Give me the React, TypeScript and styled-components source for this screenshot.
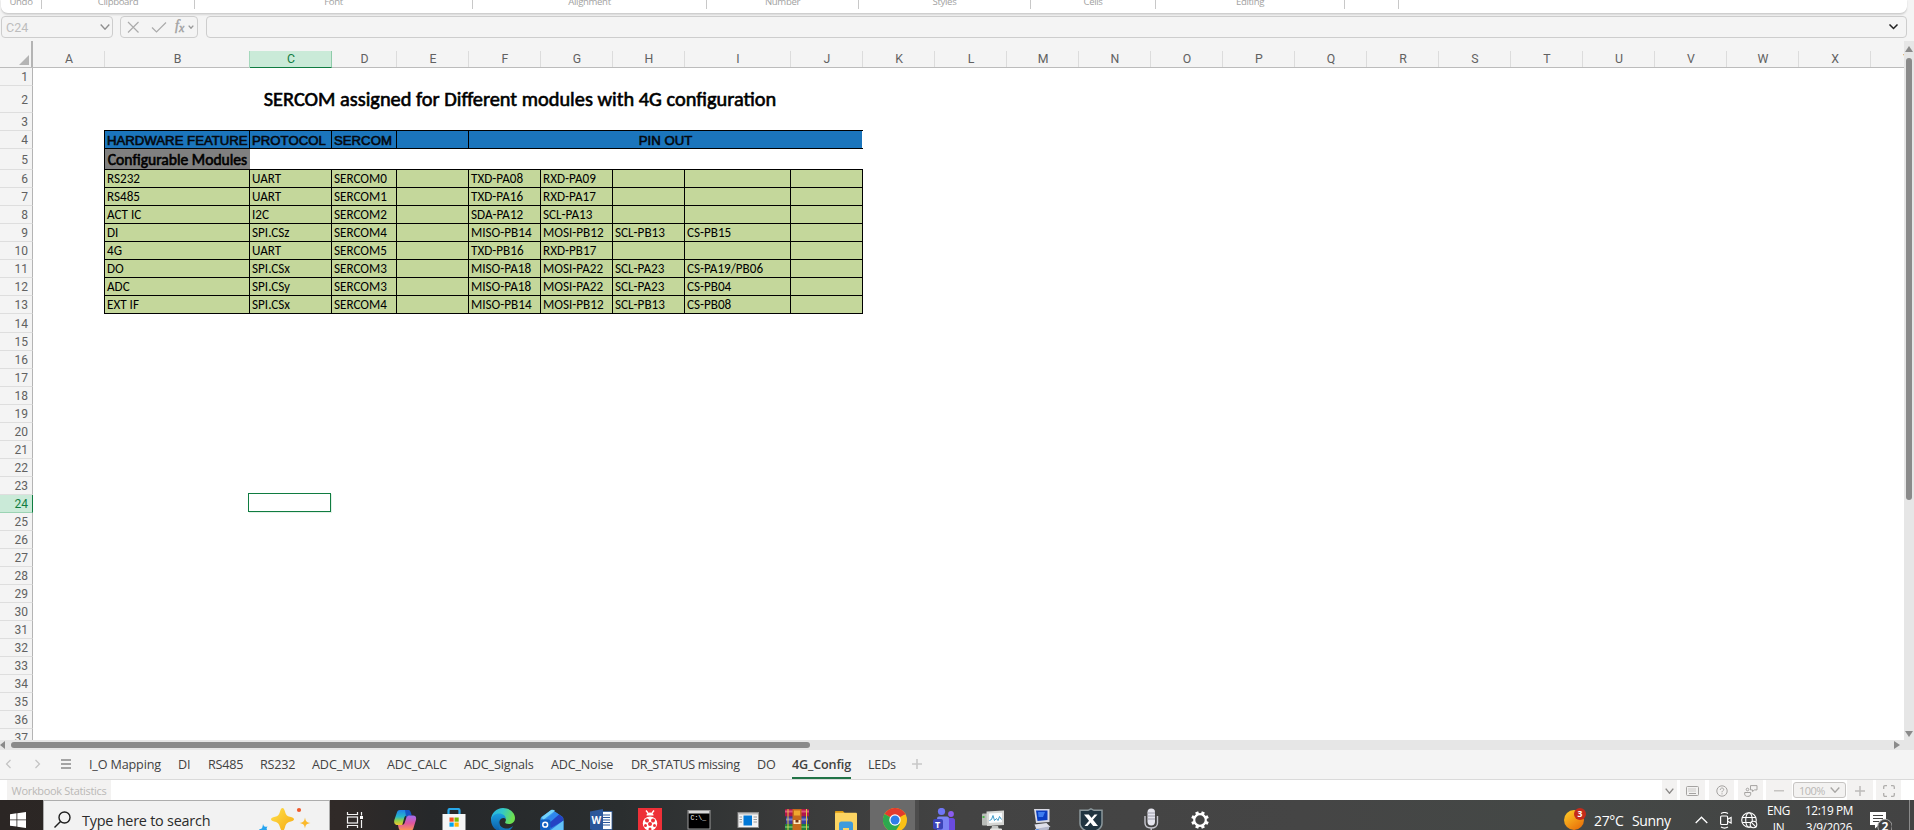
import React from "react";
import styled, { createGlobalStyle, css } from "styled-components";

const GlobalStyle = createGlobalStyle`
  * { box-sizing: border-box; }
  body { margin: 0; background: #fff; overflow: hidden; }
  svg { display: block; flex: none; }
`;

const ui = `"Open Sans", "Noto Sans", sans-serif`;
const narrow = `Roboto, "Liberation Sans", sans-serif`;
const sheetFont = `Carlito, Lato, "Open Sans", sans-serif`;
const heading = `"Liberation Sans", Arial, sans-serif`;

const Window = styled.div`
  width: 1914px;
  height: 830px;
  display: flex;
  flex-direction: column;
  overflow: hidden;
  background: #f4f4f4;
  font-family: ${ui};
`;

/* ---------- ribbon ---------- */
const Ribbon = styled.div`
  height: 14px;
  width: 1906px;
  margin-left: 1px;
  flex: none;
  display: flex;
  background: #fff;
  border-bottom: 1px solid #cfcfcf;
  border-radius: 0 0 7px 7px;
  box-shadow: 0 1px 2px #0000001f;
`;
const RibbonGroup = styled.div<{ $w: number }>`
  width: ${(p) => p.$w}px;
  height: 9px;
  border-right: 1px solid #c8c8c8;
  overflow: hidden;
  display: flex;
  justify-content: center;
  align-items: flex-end;
  font-size: 9.6px;
  line-height: 13px;
  letter-spacing: -0.35px;
  color: #a2a2a2;
  span { margin-bottom: 1px; }
`;

/* ---------- formula bar ---------- */
const FormulaBar = styled.div`
  height: 27px;
  flex: none;
  display: flex;
  padding: 2px 0 0 1px;
`;
const Box = styled.div<{ $w: number; $ml?: number }>`
  width: ${(p) => p.$w}px;
  margin-left: ${(p) => p.$ml ?? 0}px;
  height: 22px;
  flex: none;
  border: 1px solid #cdcdcd;
  border-radius: 4px;
  display: flex;
  align-items: center;
`;
const NameText = styled.span`
  font: 12.5px ${narrow};
  color: #bdbdbd;
  margin-left: 4px;
  width: 94px;
`;
const FxText = styled.span`
  font: italic 14px "Liberation Serif", serif;
  color: #a2a2a2;
  margin: -2px 4px 0 7px;
  -webkit-text-stroke: 0.4px #a2a2a2;
  sub { font-size: 12px; line-height: 0; vertical-align: -2px; }
`;

/* ---------- sheet ---------- */
const Workspace = styled.div`
  height: 699px;
  flex: none;
  display: flex;
`;
const Sheet = styled.div`
  width: 1904px;
  height: 699px;
  overflow: hidden;
  position: relative;
  background: #fff;
`;
const HeaderRow = styled.div`
  display: flex;
  align-items: flex-end;
  height: 27px;
  width: 1977px;
  background: #f4f4f4;
  border-bottom: 1px solid #bcbcbc;
`;
const Corner = styled.div`
  width: 33px;
  height: 26px;
  border-right: 2px solid #b4b4b4;
  display: flex;
  justify-content: flex-end;
  align-items: flex-end;
  padding: 0 2px 2px 0;
`;
const ColHead = styled.div<{ $w: number; $on?: boolean }>`
  width: ${(p) => p.$w}px;
  height: 16px;
  padding-left: 1px;
  border-right: 1px solid #dcdcdc;
  text-align: center;
  font: 12.3px/16px ${narrow};
  color: #616161;
  flex: none;
  ${(p) =>
    p.$on &&
    css`
      background: #caead8;
      color: #107c41;
      height: 17px;
      margin-bottom: -1px;
      border-bottom: 1px solid #107c41;
      border-right-color: #8fcbaa;
      box-shadow: -1px 0 0 #a5d8bc;
    `}
`;
const Row = styled.div<{ $h: number }>`
  display: flex;
  height: ${(p) => p.$h}px;
`;
const RowHead = styled.div<{ $on?: boolean }>`
  width: 33px;
  flex: none;
  background: ${(p) => (p.$on ? "#caead8" : "#f4f4f4")};
  color: ${(p) => (p.$on ? "#107c41" : "#616161")};
  border-right: 1px solid ${(p) => (p.$on ? "#107c41" : "#b4b4b4")};
  border-bottom: 1px solid ${(p) => (p.$on ? "#9bd3b3" : "#dedede")};
  display: flex;
  align-items: center;
  justify-content: flex-end;
  padding: 1px 4px 0 0;
  font: 12px ${narrow};
`;
const Gap = styled.div<{ $w: number; $right?: boolean; $bottom?: boolean }>`
  width: ${(p) => p.$w}px;
  border-right: ${(p) => (p.$right ? "1px solid #000" : "0")};
  border-bottom: ${(p) => (p.$bottom ? "1px solid #000" : "0")};
`;
const Title = styled.div`
  width: 830px;
  text-align: center;
  font: 400 20.35px/27px ${sheetFont};
  -webkit-text-stroke: 0.6px #000;
  color: #000;
`;
const Cell = styled.div<{ $w: number }>`
  width: ${(p) => p.$w}px;
  background: #c4d79b;
  border-right: 1px solid #000;
  border-bottom: 1px solid #000;
  padding-left: 2px;
  font: 13.15px/17px ${sheetFont};
  color: #000;
  white-space: nowrap;
`;
const HeadCell = styled.div<{ $w: number; $last?: boolean }>`
  width: ${(p) => p.$w}px;
  background: #1b75bc;
  border-right: ${(p) => (p.$last ? "0" : "1px solid #000")};
  border-bottom: 1px solid #000;
  padding-left: ${(p) => (p.$last ? 0 : 2)}px;
  text-align: ${(p) => (p.$last ? "center" : "left")};
  font: 400 13.2px/19px ${heading};
  -webkit-text-stroke: 0.6px #05090f;
  color: #05090f;
  white-space: nowrap;
`;
const LineEnd = styled.div`
  width: 1px;
  border-bottom: 1px solid #000;
`;
const ModulesCell = styled.div`
  width: 145px;
  background: #808080;
  border-bottom: 1px solid #000;
  text-align: center;
  font: 400 15.6px/22px ${sheetFont};
  -webkit-text-stroke: 0.6px #000;
  color: #000;
  white-space: nowrap;
`;
const Selection = styled.div`
  position: absolute;
  left: 248px;
  top: 452px;
  width: 83px;
  height: 19px;
  border: 1px solid #107c41;
  box-shadow: 1px 1px 0 #e3f2e8;
`;

/* ---------- scrollbars ---------- */
const VScroll = styled.div`
  width: 10px;
  height: 699px;
  background: #e6e6e6;
  display: flex;
  flex-direction: column;
  align-items: center;
  padding: 5px 0 3px;
`;
const VThumb = styled.div`
  width: 6px;
  height: 442px;
  margin: 6px 0 auto;
  border-radius: 3px;
  background: #8a8a8a;
`;
const HScroll = styled.div`
  height: 10px;
  flex: none;
  background: #e6e6e6;
  display: flex;
  align-items: center;
  padding-right: 14px;
`;
const HThumb = styled.div`
  width: 799px;
  height: 6px;
  margin: 0 auto 0 6px;
  border-radius: 3px;
  background: #8a8a8a;
`;

/* ---------- tabs ---------- */
const TabBar = styled.div`
  height: 30px;
  flex: none;
  display: flex;
  border-bottom: 1px solid #dadada;
`;
const TabTools = styled.div`
  width: 89px;
  flex: none;
  display: flex;
  align-items: center;
  padding: 0 0 1px 5px;
`;
const TabSlot = styled.div<{ $w: number }>`
  width: ${(p) => p.$w}px;
  flex: none;
`;
const TabLabel = styled.span<{ $on?: boolean; $ls: number }>`
  display: inline-block;
  height: 29px;
  font: ${(p) => (p.$on ? 600 : 400)} 12.6px/29px ${ui};
  letter-spacing: ${(p) => p.$ls}px;
  color: #424242;
  white-space: nowrap;
  border-bottom: ${(p) => (p.$on ? "2px solid #217346" : "0")};
`;

/* ---------- status bar ---------- */
const StatusBar = styled.div`
  height: 20px;
  flex: none;
  display: flex;
  background: #fff;
`;
const Stats = styled.div`
  margin: 0 auto 0 7px;
  width: 104px;
  background: #f3f2f1;
  font-size: 11px;
  line-height: 22px;
  letter-spacing: -0.32px;
  text-align: center;
  color: #bab8b6;
  white-space: nowrap;
`;
const StatusButton = styled.div<{ $w: number; $mr?: number }>`
  width: ${(p) => p.$w}px;
  margin-right: ${(p) => p.$mr ?? 0}px;
  background: #f3f2f1;
  display: flex;
  align-items: center;
  justify-content: center;
  padding-top: 2px;
`;
const Zoom = styled.div`
  width: 53px;
  height: 16px;
  margin: 2px 1px 0;
  border: 1px solid #c6c4c2;
  border-radius: 3px;
  background: #f3f2f1;
  display: flex;
  align-items: center;
  font-size: 11px;
  letter-spacing: -0.5px;
  color: #bab8b6;
  padding-left: 5px;
  gap: 5px;
`;

/* ---------- taskbar ---------- */
const Taskbar = styled.div`
  height: 30px;
  flex: none;
  display: flex;
  overflow: hidden;
  background: linear-gradient(90deg, #2b2624 0, #302a28 340px, #26282a 430px, #2a2e2f 620px, #3a3b3b 800px, #434343 960px, #454545 1300px, #444846 1560px, #434343 1914px);
`;
const Start = styled.div`
  width: 43px;
  padding: 12px 0 0 10px;
`;
const Search = styled.div`
  width: 287px;
  height: 30px;
  background: #f2f2f2;
  border: 1px solid #adadad;
  border-bottom: 0;
  display: flex;
  padding: 6px 0 0 10px;
`;
const SearchText = styled.span`
  font-size: 14.4px;
  line-height: 27px;
  letter-spacing: -0.22px;
  color: #2b2b2b;
  margin-left: 11px;
  width: 165px;
  white-space: nowrap;
`;
const AppSlot = styled.div<{ $active?: boolean; $ml?: number }>`
  width: 49px;
  height: 30px;
  margin-left: ${(p) => p.$ml ?? 0}px;
  flex: none;
  display: flex;
  justify-content: center;
  padding-top: 8px;
  background: ${(p) => (p.$active ? "linear-gradient(90deg, #6a6a6a 45px, #4c4c4c 45px)" : "none")};
  overflow: hidden;
`;
const Tray = styled.div`
  display: flex;
  margin-left: auto;
  width: 350px;
  height: 30px;
  overflow: hidden;
  color: #fff;
`;
const Weather = styled.div`
  font-size: 14px;
  line-height: 41px;
  letter-spacing: -0.35px;
  width: 101px;
  margin-left: 5px;
  white-space: pre;
  span { display: inline-block; width: 38px; }
`;
const TrayIcon = styled.div<{ $w: number; $top: number }>`
  width: ${(p) => p.$w}px;
  padding-top: ${(p) => p.$top}px;
`;
const Stack = styled.div<{ $w: number }>`
  width: ${(p) => p.$w}px;
  padding-top: 2px;
  text-align: center;
  font-size: 11.8px;
  line-height: 17px;
  letter-spacing: -0.35px;
  white-space: nowrap;
`;
const Desktop = styled.div`
  width: 5px;
  margin-left: auto;
  height: 30px;
  border-left: 1px solid #8a8a8a;
`;

/* ---------- data ---------- */
const groups: [string, number][] = [
  ["Undo", 41], ["Clipboard", 153], ["Font", 278], ["Alignment", 234], ["Number", 152],
  ["Styles", 172], ["Cells", 125], ["Editing", 189], ["", 54],
];
const columns: [string, number][] = [
  ["A", 72], ["B", 145], ["C", 82], ["D", 65], ["E", 72], ["F", 72], ["G", 72], ["H", 72], ["I", 106], ["J", 72],
  ..."KLMNOPQRSTUVWXY".split("").map((c) => [c, 72] as [string, number]),
];
const widths = columns.slice(1, 10).map((c) => c[1]);
const modules = [
  ["RS232", "UART", "SERCOM0", "", "TXD-PA08", "RXD-PA09", "", "", ""],
  ["RS485", "UART", "SERCOM1", "", "TXD-PA16", "RXD-PA17", "", "", ""],
  ["ACT IC", "I2C", "SERCOM2", "", "SDA-PA12", "SCL-PA13", "", "", ""],
  ["DI", "SPI.CSz", "SERCOM4", "", "MISO-PB14", "MOSI-PB12", "SCL-PB13", "CS-PB15", ""],
  ["4G", "UART", "SERCOM5", "", "TXD-PB16", "RXD-PB17", "", "", ""],
  ["DO", "SPI.CSx", "SERCOM3", "", "MISO-PA18", "MOSI-PA22", "SCL-PA23", "CS-PA19/PB06", ""],
  ["ADC", "SPI.CSy", "SERCOM3", "", "MISO-PA18", "MOSI-PA22", "SCL-PA23", "CS-PB04", ""],
  ["EXT IF", "SPI.CSx", "SERCOM4", "", "MISO-PB14", "MOSI-PB12", "SCL-PB13", "CS-PB08", ""],
];
const tabs: [string, number, number][] = [
  ["I_O Mapping", 89, -0.15], ["DI", 30, -0.2], ["RS485", 52, -0.2], ["RS232", 52, -0.2], ["ADC_MUX", 75, -0.1],
  ["ADC_CALC", 77, -0.1], ["ADC_Signals", 87, -0.15], ["ADC_Noise", 80, -0.2], ["DR_STATUS missing", 126, -0.38],
  ["DO", 35, -0.2], ["4G_Config", 76, -0.15], ["LEDs", 44, -0.2],
];

const Chevron = ({ w = 9, h = 5, color = "#9a9a9a", sw = 1.4 }: { w?: number; h?: number; color?: string; sw?: number }) => (
  <svg width={w} height={h} viewBox={`0 0 ${w} ${h}`} fill="none" stroke={color} strokeWidth={sw}>
    <path d={`M.7 .6 L${w / 2} ${h - 0.8} L${w - 0.7} .6`} />
  </svg>
);

const Icon = ({ children, size = 24 }: { children: React.ReactNode; size?: number }) => (
  <svg width={size} height={size} viewBox={`0 0 ${size} ${size}`}>{children}</svg>
);

const TaskView = () => (
  <Icon>
    <g fill="none" stroke="#f2f2f2" strokeWidth="1.2">
      <path d="M4.5 4v2.5h10V4M4.5 20v-2.5h10V20" />
      <rect x="4.5" y="9" width="10" height="6" />
      <path d="M18.5 4v3.5M18.5 12v8" />
    </g>
    <rect x="17" y="8" width="3" height="3" fill="#fff" />
  </Icon>
);
const Copilot = () => (
  <Icon>
    <defs>
      <linearGradient id="cpA" x1="0" y1="0" x2="0" y2="1">
        <stop offset="0" stopColor="#1f7fe8" /><stop offset=".45" stopColor="#28b7c9" /><stop offset=".7" stopColor="#8fcf4a" /><stop offset="1" stopColor="#f2c52e" />
      </linearGradient>
      <linearGradient id="cpB" x1="0" y1="0" x2="0" y2="1">
        <stop offset="0" stopColor="#a06df0" /><stop offset=".5" stopColor="#e0569f" /><stop offset="1" stopColor="#ff9a4d" />
      </linearGradient>
    </defs>
    <path d="M7 2h8.5c1.800 1.200 2 4 1.300 5.500h-3c-1.500 0-2.200 1-2.600 2.400L9.300 17H4.500C1.500 17 .6 14.500 1.500 11.500L4 4.300C4.600 2.900 5.500 2 7 2z" fill="url(#cpA)" />
    <path d="M12 2h3.500c1.500.2 2 1.500 2.500 3l.8 2.500h-3c-1.500 0-2.200 1-2.600 2.400z" fill="#1554c4" />
    <path d="M17.500 7.500h2.500c3 0 3.600 2.300 2.800 5L20.500 20c-.6 2-1.800 3-3.500 3H8.500C7 23 6 21.500 5.500 19.500L5 17h4c1.500 0 2.300-.8 2.800-2.400l1.600-5c.5-1.500 1.500-2.100 4.100-2.100z" fill="url(#cpB)" />
  </Icon>
);
const Store = () => (
  <Icon>
    <path d="M6.500 7V2.500c0-1 .5-1.500 1.500-1.500h8c1 0 1.500.5 1.500 1.500V7" fill="none" stroke="#28a8ea" strokeWidth="2.200" />
    <path d="M.5 6h23v18H.5z" fill="#f6f6f6" />
    <rect x="7.500" y="9.500" width="4.200" height="4.200" fill="#f25022" /><rect x="12.500" y="9.500" width="4.200" height="4.200" fill="#7fba00" />
    <rect x="7.500" y="14.500" width="4.200" height="4.200" fill="#00a4ef" /><rect x="12.500" y="14.500" width="4.200" height="4.200" fill="#ffb900" />
  </Icon>
);
const Edge = () => (
  <Icon>
    <defs>
      <linearGradient id="eg1" x1="0" y1="0" x2="1" y2=".3"><stop offset="0" stopColor="#25b0e8" /><stop offset=".5" stopColor="#33c8c8" /><stop offset="1" stopColor="#6de04f" /></linearGradient>
      <linearGradient id="eg2" x1="0" y1="0" x2="0" y2="1"><stop offset="0" stopColor="#1b9fe0" /><stop offset="1" stopColor="#0c59a4" /></linearGradient>
    </defs>
    <path d="M0 12C0 5 5.500 0 12 0s12 4.500 12 10c0 4-3 6-6.500 6-3 0-4-1-3-2.500.5-1 .5-2 0-3C13.500 8 11 7.500 9 8z" fill="url(#eg1)" />
    <path d="M0 12C.5 8 4 5.500 8 5.500c4 0 7 2.500 6.800 5.500C13 9 9.500 10 8.500 13c-1 4 2 7.500 6 8l-1 3H12C5.500 24 0 18.700 0 12z" fill="url(#eg2)" />
    <path d="M8.500 12c-1.500 5 2 8.500 7 8.500 3 0 5-1 6.500-2.500-1.500 3.500-5 6-9 6C8 24 5.500 17 8.500 12z" fill="#1473b8" />
  </Icon>
);
const Outlook = () => (
  <Icon>
    <defs><linearGradient id="ol" x1="0" y1="0" x2="1" y2="1"><stop offset="0" stopColor="#4bb6f7" /><stop offset="1" stopColor="#1a5fd6" /></linearGradient></defs>
    <path d="M.5 11.500c0-1.500.5-2.300 1.500-3l8-5.500c1.300-1 2.700-1 4 0l8 5.500c1 .7 1.500 1.500 1.500 3V24H.5z" fill="url(#ol)" />
    <path d="M2 9l9-7c1.500-.7 3-.3 4 .8L3 12z" fill="#74d4fd" />
    <path d="M3.500 13L15 4l4 2.500L7 16z" fill="#2f86ee" />
    <path d="M8 16L19 6.500l4 3V13L11 20z" fill="#2443c4" />
    <path d="M23.500 12.500V24H8z" fill="#63c3f7" />
    <rect x="0" y="11.500" width="10.500" height="10.500" rx="2" fill="#0f5fc2" />
    <circle cx="5.200" cy="16.700" r="2.400" fill="none" stroke="#fff" strokeWidth="1.500" />
  </Icon>
);
const iconLetter: React.CSSProperties = { fontFamily: "Open Sans, sans-serif", fontWeight: 700 };
const Word = () => (
  <Icon>
    <rect x="12" y="3.500" width="11" height="18" fill="#fff" stroke="#2b579a" strokeWidth=".8" />
    <path d="M14 7h7M14 9.500h7M14 12h7M14 14.500h7M14 17h7" stroke="#2b579a" strokeWidth="1.200" />
    <path d="M1 3.500L14 1v23L1 21.500z" fill="#2b579a" />
    <text x="2.600" y="16" fontSize="10" fill="#fff" style={iconLetter}>W</text>
  </Icon>
);
const Bug = () => (
  <Icon>
    <rect width="24" height="24" fill="#ee3038" />
    <path d="M8 2.500l2 2.500M16 2.500L14 5" stroke="#fff" strokeWidth="1.400" />
    <path d="M8.500 7.500a3.500 3 0 0 1 7 0z" fill="#fff" />
    <ellipse cx="12" cy="15.500" rx="7.200" ry="7" fill="#fff" />
    <g fill="#ee3038"><circle cx="9" cy="12.500" r="2" /><circle cx="15" cy="12.500" r="2" /><circle cx="12" cy="16" r="2" /><circle cx="7.500" cy="17.500" r="1.500" /><circle cx="16.500" cy="17.500" r="1.500" /><circle cx="12" cy="21" r="1.500" /></g>
  </Icon>
);
const Terminal = () => (
  <Icon>
    <rect x="1" y="2.500" width="22" height="18.500" fill="#000" stroke="#9b9b9b" />
    <rect x="1.500" y="3" width="21" height="2.500" fill="#d9d9d9" />
    <text x="3.500" y="12" fontSize="6.500" fill="#fff" style={{ fontFamily: "Liberation Mono, monospace" }}>C:\_</text>
  </Icon>
);
const News = () => (
  <Icon>
    <rect x="2" y="4.500" width="20.500" height="15" fill="#f3f3f3" stroke="#8e8e8e" />
    <rect x="2.500" y="5" width="19.500" height="1.500" fill="#bcbcbc" />
    <rect x="7.500" y="7.500" width="8.500" height="10" fill="#0078d7" />
    <path d="M3.500 9H6M3.500 11.500H6M3.500 14H6M17.500 9h3.500M17.500 11.500h3.500M17.500 14h3.500" stroke="#9a9a9a" />
  </Icon>
);
const Rar = () => (
  <Icon>
    <rect x="0" y="1" width="24" height="7.500" rx="1" fill="#b0174b" /><rect x="0" y="2.500" width="24" height="2" fill="#e0557a" />
    <rect x="1" y="8.500" width="22" height="7.500" fill="#3c3f9e" /><rect x="1" y="10.500" width="22" height="2" fill="#7a7fd0" />
    <rect x="0" y="16" width="24" height="8" fill="#23803a" /><rect x="0" y="18" width="24" height="2" fill="#58b060" />
    <rect x="7.500" y="1" width="9" height="23" fill="#c66a1c" /><path d="M9 2.500h6v5H9z" fill="#f0a830" /><path d="M8.500 12h7v4h-7z" fill="#fbe9c0" /><rect x="10.500" y="12" width="3" height="2.500" fill="#7a3510" />
    <path d="M3 1v23M21.500 1v23" stroke="#e3c443" />
  </Icon>
);
const Folder = () => (
  <Icon>
    <path d="M1 4c0-.6.400-1 1-1h7l2 2.500H1z" fill="#dc9a10" />
    <rect x="1" y="4.800" width="22" height="19" rx="1" fill="#fcd462" />
    <path d="M5 24v-8c0-1.500.8-2.500 2.500-2.500h9c1.700 0 2.500 1 2.500 2.500v8h-4v-4H9v4z" fill="#3f9bdc" />
  </Icon>
);
const Chrome = () => (
  <Icon>
    <circle cx="12" cy="12" r="12" fill="#fbc116" />
    <path d="M12 12L1.600 6A12 12 0 0 1 22.400 6z" fill="#e33b2e" />
    <path d="M12 12L1.600 6A12 12 0 0 0 12 24l5-8z" fill="#2da94f" />
    <path d="M12 6h10.400" stroke="#e33b2e" strokeWidth="1" />
    <circle cx="12" cy="12" r="5.700" fill="#fff" /><circle cx="12" cy="12" r="4.500" fill="#2f7de9" />
  </Icon>
);
const Teams = () => (
  <Icon>
    <circle cx="9.500" cy="3.500" r="3.600" fill="#6f76f5" /><circle cx="19" cy="6" r="2.900" fill="#8b5cf0" />
    <rect x="15" y="10" width="8" height="14" rx="2.500" fill="#6a4be0" /><rect x="5" y="8.500" width="12" height="16" rx="2" fill="#7b83f4" />
    <rect x="1" y="11" width="10" height="10.500" rx="2" fill="#3b43b8" />
    <text x="3" y="19.500" fontSize="9" fill="#fff" style={iconLetter}>T</text>
  </Icon>
);
const Monitor = () => (
  <Icon>
    <rect x="1" y="5.500" width="10" height="12" rx="1" fill="#b9bcb8" /><rect x="1.500" y="8" width="2" height="2" fill="#49b749" />
    <path d="M5.500 3.500L23 2.500v14.500L6 18z" fill="#d5d6d4" /><path d="M8 5.500l13-.700v9.500l-13 .7z" fill="#fafdff" />
    <path d="M8.500 12.500l2-1 1.500-4 1.500 5 2-2 1.500 2 1.500-4 2 3" fill="none" stroke="#3d9ac8" />
    <path d="M11 18h6l1 4h-8z" fill="#c4c6c4" /><rect x="9" y="20.500" width="12" height="4" rx="1" fill="#e3e3e1" />
  </Icon>
);
const RemotePc = () => (
  <Icon>
    <path d="M4 1h15.500v13L6 15z" fill="#d8d9e4" /><path d="M6 2.500h11.500V12L7.500 13z" fill="#0a3ec2" /><path d="M8 4h7l-2 5H8.500z" fill="#3d7df0" />
    <path d="M4.500 16.500l12-1.500 4 4-14 2.500z" fill="#dfe0ea" /><path d="M5 21l14-2.500v3L9 24H5z" fill="#b5b9cc" /><path d="M5 22c2-1.500 5-1 6 2H5z" fill="#2a7bf0" />
  </Icon>
);
const Shield = () => (
  <Icon>
    <path d="M12 .8l3 1.500h8v13c0 4.500-4 7.500-11 9C5 22.800 1 19.800 1 15.300v-13h8z" fill="#203440" stroke="#8b979b" strokeWidth="1.500" />
    <path d="M5 6.500h4.800l9.200 11.500h-4.800z" fill="#fff" /><path d="M18.500 6.500h-3L5.500 18h3z" fill="#fff" />
  </Icon>
);
const Mic = () => (
  <Icon>
    <rect x="8.500" y=".5" width="7.500" height="17" rx="3.700" fill="#e5e5ee" /><path d="M8.500 5h7.500M8.500 8h7.500M8.500 11h7.500" stroke="#9a9aa8" />
    <path d="M6 8v7c0 3 2.500 5 6.200 5s6.300-2 6.300-5V8M12.200 20v4" fill="none" stroke="#c6c6ce" strokeWidth="1.400" />
  </Icon>
);
const Gear = () => (
  <Icon>
    <circle cx="12" cy="12" r="5.800" fill="none" stroke="#fff" strokeWidth="2.200" />
    <g stroke="#fff" strokeWidth="3.200">
      {[22.5, 67.5, 112.5, 157.5, 202.5, 247.5, 292.5, 337.5].map((a) => (
        <path key={a} d="M12 6.200V3.200" transform={`rotate(${a} 12 12)`} />
      ))}
    </g>
  </Icon>
);

export default function App() {
  return (
    <Window>
      <GlobalStyle />
      <Ribbon>
        {groups.map(([name, w], i) => (
          <RibbonGroup key={i} $w={w}><span>{name}</span></RibbonGroup>
        ))}
      </Ribbon>
      <FormulaBar>
        <Box $w={112}><NameText>C24</NameText><Chevron w={10} h={6} color="#8f8f8f" /></Box>
        <Box $w={78} $ml={7}>
          <svg width="47" height="14" viewBox="0 0 47 14" fill="none" stroke="#ababab" strokeWidth="1.200">
            <path d="M7 2l10.500 10.500M17.500 2L7 12.500M31 7.500l4.500 4.500L45 2.500" />
          </svg>
          <FxText>f<sub>x</sub></FxText>
          <Chevron w={6} h={4} />
        </Box>
        <Box $w={1701} $ml={8}>
          <svg width="1692" height="6" viewBox="0 0 1692 6"><path d="M1682.500 .5l4 4 4-4" fill="none" stroke="#222" strokeWidth="1.500" /></svg>
        </Box>
      </FormulaBar>

      <Workspace>
        <Sheet>
          <HeaderRow>
            <Corner><svg width="10" height="10"><path d="M10 0v10H0z" fill="#b4b4b4" /></svg></Corner>
            {columns.map(([c, w]) => <ColHead key={c} $w={w} $on={c === "C"}>{c}</ColHead>)}
          </HeaderRow>
          <Row $h={18}><RowHead>1</RowHead></Row>
          <Row $h={27}><RowHead>2</RowHead><Gap $w={72} /><Title>SERCOM assigned for Different modules with 4G configuration</Title></Row>
          <Row $h={18}><RowHead>3</RowHead><Gap $w={71} /><Gap $w={759} $bottom /></Row>
          <Row $h={18}>
            <RowHead>4</RowHead><Gap $w={72} $right />
            <HeadCell $w={145}>HARDWARE FEATURE</HeadCell>
            <HeadCell $w={82}>PROTOCOL</HeadCell>
            <HeadCell $w={65}>SERCOM</HeadCell>
            <HeadCell $w={72} />
            <HeadCell $w={393} $last>PIN OUT</HeadCell>
            <LineEnd />
          </Row>
          <Row $h={21}><RowHead>5</RowHead><Gap $w={72} $right /><ModulesCell>Configurable Modules</ModulesCell><Gap $w={613} $bottom /></Row>
          {modules.map((m, r) => (
            <Row key={r} $h={18}>
              <RowHead>{r + 6}</RowHead><Gap $w={72} $right />
              {m.map((t, c) => <Cell key={c} $w={widths[c]}>{t}</Cell>)}
            </Row>
          ))}
          {Array.from({ length: 24 }, (_, i) => (
            <Row key={i} $h={i === 0 ? 19 : 18}><RowHead $on={i + 14 === 24}>{i + 14}</RowHead></Row>
          ))}
          <Selection />
        </Sheet>
        <VScroll>
          <svg width="8" height="6"><path d="M4 0l4 6H0z" fill="#8a8a8a" /></svg>
          <VThumb />
          <svg width="8" height="6"><path d="M0 0h8L4 6z" fill="#8a8a8a" /></svg>
        </VScroll>
      </Workspace>

      <HScroll>
        <svg width="5" height="8"><path d="M5 0v8L0 4z" fill="#8a8a8a" /></svg>
        <HThumb />
        <svg width="6" height="8"><path d="M0 0v8l6-4z" fill="#8a8a8a" /></svg>
      </HScroll>

      <TabBar>
        <TabTools>
          <svg width="67" height="12" viewBox="0 0 67 12" fill="none">
            <path d="M5.500 2L1.500 6l4 4M30.500 2l4 4-4 4" stroke="#c3c3c3" strokeWidth="1.200" />
            <path d="M56 2h10M56 6h10M56 10h10" stroke="#555" strokeWidth="1.100" />
          </svg>
        </TabTools>
        {tabs.map(([name, w, ls]) => (
          <TabSlot key={name} $w={w}><TabLabel $ls={ls} $on={name === "4G_Config"}>{name}</TabLabel></TabSlot>
        ))}
        <svg width="10" height="28" viewBox="0 0 10 28"><path d="M5 9v10M0 14h10" stroke="#c8c8c8" strokeWidth="1.600" /></svg>
      </TabBar>

      <StatusBar>
        <Stats>Workbook Statistics</Stats>
        <StatusButton $w={15} $mr={3}><Chevron w={9} h={6} color="#8d8b89" /></StatusButton>
        <StatusButton $w={25} $mr={4}>
          <svg width="13" height="10" fill="none" stroke="#a5a3a1"><rect x=".5" y=".5" width="12" height="9" rx="1" /><path d="M2.500 3h8M2.500 5h8" strokeDasharray="1 1" /><path d="M3 7.500h7" /></svg>
        </StatusButton>
        <StatusButton $w={25} $mr={4}>
          <svg width="12" height="12" fill="none" stroke="#a5a3a1"><circle cx="6" cy="6" r="5.200" /><path d="M4.300 4.800C4.300 2.500 7.800 2.500 7.700 4.600 7.600 5.800 6 5.800 6 7.300M6 8.300v1.100" /></svg>
        </StatusButton>
        <StatusButton $w={25} $mr={3}>
          <svg width="14" height="12" fill="none" stroke="#a5a3a1"><circle cx="3.500" cy="4.500" r="1.300" /><path d="M.7 7.500h6v1.700c0 1.300-1 2.200-3 2.200s-3-.9-3-2.200zM6.500.6H13v4.300h-2.500L8.500 6.500V4.900h-2z" /></svg>
        </StatusButton>
        <StatusButton $w={26}><svg width="10" height="2"><rect width="10" height="1.500" fill="#c6c4c2" /></svg></StatusButton>
        <Zoom>100%<Chevron w={10} h={6} color="#a8a6a4" /></Zoom>
        <StatusButton $w={26} $mr={3}><svg width="10" height="10"><path d="M5 0v10M0 5h10" stroke="#bdbbb9" strokeWidth="1.500" /></svg></StatusButton>
        <StatusButton $w={25} $mr={13}>
          <svg width="12" height="12" fill="none" stroke="#b0aeac" strokeWidth="1.300"><path d="M.7 4V2c0-.8.500-1.300 1.300-1.300h2M8 .7h2c.8 0 1.300.5 1.300 1.300v2M11.300 8v2c0 .8-.5 1.300-1.300 1.300H8M4 11.300H2c-.8 0-1.300-.5-1.300-1.300V8" /></svg>
        </StatusButton>
      </StatusBar>

      <Taskbar>
        <Start>
          <svg width="16" height="16" fill="#fff"><path d="M0 2.200L6.500 1.300V7.500H0zM7.300 1.200L16 0v7.500H7.300zM0 8.300h6.500v6.300L0 13.700zM7.300 8.300H16V16l-8.700-1.200z" /></svg>
        </Start>
        <Search>
          <svg width="17" height="24" viewBox="0 0 17 24" fill="none" stroke="#1f1f1f" strokeWidth="1.400"><circle cx="10.500" cy="10.500" r="5.500" /><path d="M6.500 14.500L.5 20.500" /></svg>
          <SearchText>Type here to search</SearchText>
          <svg width="64" height="24" viewBox="0 0 64 24">
            <defs><linearGradient id="star" x1="0" y1="0" x2="1" y2="1"><stop offset="0" stopColor="#ffe14a" /><stop offset="1" stopColor="#f5a914" /></linearGradient></defs>
            <path d="M24 1c1 0 1.800 1 2.500 3.500 1 3.500 2 4.500 5 5.300 2.500.7 4 1.200 4 2.500s-1.500 1.800-4 2.500c-3 .8-4 2-5 5.500-.7 2.500-1.500 3.700-2.500 3.700s-1.800-1.200-2.500-3.700c-1-3.500-2-4.700-5-5.500-2.500-.7-4-1.200-4-2.500s1.500-1.800 4-2.500c3-.8 4-1.800 5-5.300.7-2.500 1.500-3.500 2.500-3.500z" fill="url(#star)" transform="translate(11.500 0)" />
            <circle cx="52" cy="3" r="2.100" fill="#f0592b" />
            <path d="M58 10.500c.7 4 1.500 5 5.500 5.500-4 .8-4.800 1.500-5.500 5.500-.7-4-1.500-4.700-5.500-5.500 4-.5 4.800-1.500 5.500-5.500z" fill="#fbb92a" />
            <path d="M16 17c1 3 1.500 3 4.500 2.500-1.500 2-1 3 .5 4.500h-8c0-1-.5-1.500-1-2 3 .3 3.500-1 4-5z" fill="#25a4f0" />
          </svg>
        </Search>
        <AppSlot><TaskView /></AppSlot>
        <AppSlot $ml={1}><Copilot /></AppSlot>
        <AppSlot><Store /></AppSlot>
        <AppSlot><Edge /></AppSlot>
        <AppSlot><Outlook /></AppSlot>
        <AppSlot><Word /></AppSlot>
        <AppSlot><Bug /></AppSlot>
        <AppSlot><Terminal /></AppSlot>
        <AppSlot><News /></AppSlot>
        <AppSlot><Rar /></AppSlot>
        <AppSlot><Folder /></AppSlot>
        <AppSlot $active><Chrome /></AppSlot>
        <AppSlot><Teams /></AppSlot>
        <AppSlot><Monitor /></AppSlot>
        <AppSlot><RemotePc /></AppSlot>
        <AppSlot><Shield /></AppSlot>
        <AppSlot $ml={11}><Mic /></AppSlot>
        <AppSlot><Gear /></AppSlot>
        <Tray>
          <TrayIcon $w={25} $top={6}>
            <svg width="24" height="24" viewBox="0 0 24 24">
              <defs><linearGradient id="sun" x1="0" y1="0" x2=".7" y2="1"><stop offset="0" stopColor="#ffd028" /><stop offset="1" stopColor="#e8710a" /></linearGradient></defs>
              <circle cx="10" cy="14" r="10" fill="url(#sun)" /><circle cx="16" cy="8" r="6" fill="#c42b1c" />
              <text x="16" y="11" fontSize="8.500" fill="#fff" textAnchor="middle" style={iconLetter}>3</text>
            </svg>
          </TrayIcon>
          <Weather><span>27°C</span>Sunny</Weather>
          <TrayIcon $w={25} $top={16}><svg width="13" height="8" fill="none" stroke="#fff" strokeWidth="1.300"><path d="M.7 7L6.500 1.200 12.300 7" /></svg></TrayIcon>
          <TrayIcon $w={21} $top={12}>
            <svg width="12" height="17" fill="none" stroke="#fff" strokeWidth="1.200"><rect x=".6" y="4" width="7" height="8.500" rx="1" /><path d="M7.600 7.200l3.500-1.700v5.500L7.600 9.300M1 1.500C3 .3 6 .3 8 1.500M1 15c2 1.200 5 1.200 7 0" /></svg>
          </TrayIcon>
          <TrayIcon $w={24} $top={12}>
            <svg width="17" height="17" fill="none" stroke="#fff" strokeWidth="1.100"><circle cx="8" cy="8" r="7.300" /><ellipse cx="8" cy="8" rx="3.300" ry="7.300" /><path d="M1.200 5.500h13.600M1.200 10.500h13.600" /><circle cx="12.500" cy="12.500" r="3.300" fill="#434343" /><path d="M10.200 10.200l4.600 4.600" /></svg>
          </TrayIcon>
          <Stack $w={27}>ENG<br />IN</Stack>
          <Stack $w={74}>12:19 PM<br />3/9/2026</Stack>
          <TrayIcon $w={26} $top={12}>
            <svg width="26" height="20" viewBox="0 0 26 20">
              <path d="M4 0h16v13h-7l-4 3.500V13H4z" fill="#fff" /><path d="M7 3.500h10M7 6.500h10M7 9.500h6" stroke="#434343" strokeWidth="1.200" />
              <circle cx="19" cy="14.500" r="7.200" fill="#434343" stroke="#a5a5a5" />
              <text x="19" y="18.500" fontSize="12" fill="#fff" textAnchor="middle" style={iconLetter}>2</text>
            </svg>
          </TrayIcon>
          <Desktop />
        </Tray>
      </Taskbar>
    </Window>
  );
}
